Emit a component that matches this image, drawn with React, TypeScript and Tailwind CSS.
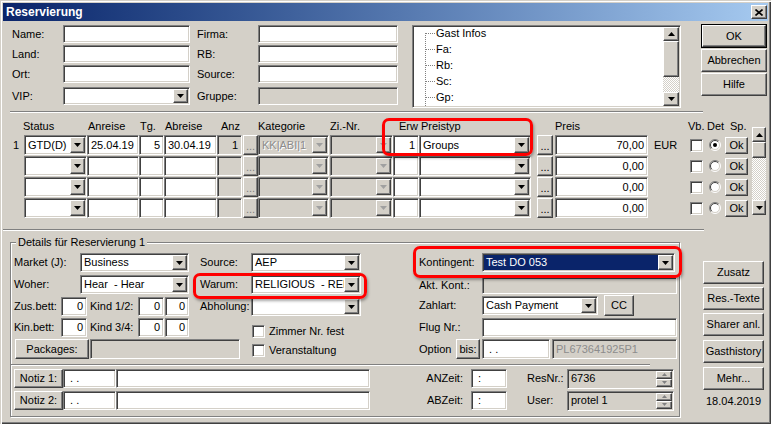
import clsx from "clsx";
import type { ReactNode } from "react";

const SUNKEN =
  "border border-t-[#808080] border-l-[#808080] border-b-white border-r-white shadow-[inset_1px_1px_0_#404040,inset_-1px_-1px_0_#d4d0c8]";
const RAISED =
  "border border-t-white border-l-white border-b-[#404040] border-r-[#404040] bg-[#d4d0c8] shadow-[inset_-1px_-1px_0_#808080]";
const HATCH =
  "bg-[repeating-conic-gradient(#ffffff_0%_25%,#d4d0c8_0%_50%)] bg-[length:2px_2px]";

interface RowData {
  idx: string;
  status: string;
  anreise: string;
  tg: string;
  abreise: string;
  anz: string;
  kat: string;
  erw: string;
  preistyp: string;
  preis: string;
  first: boolean;
}

const rows: RowData[] = [
  { idx: "1", status: "GTD(D)", anreise: "25.04.19", tg: "5", abreise: "30.04.19", anz: "1", kat: "KK|ABI|1", erw: "1", preistyp: "Groups", preis: "70,00", first: true },
  { idx: "", status: "", anreise: "", tg: "", abreise: "", anz: "", kat: "", erw: "", preistyp: "", preis: "0,00", first: false },
  { idx: "", status: "", anreise: "", tg: "", abreise: "", anz: "", kat: "", erw: "", preistyp: "", preis: "0,00", first: false },
  { idx: "", status: "", anreise: "", tg: "", abreise: "", anz: "", kat: "", erw: "", preistyp: "", preis: "0,00", first: false },
];

const Tri = ({ up = false, color = "#000" }: { up?: boolean; color?: string }) => (
  <svg width="7" height="4" viewBox="0 0 7 4">
    <path d={up ? "M0 4h7L3.5 0z" : "M0 0h7L3.5 4z"} fill={color} />
  </svg>
);

const SmallTri = ({ up = false }: { up?: boolean }) => (
  <svg width="5" height="3" viewBox="0 0 5 3">
    <path d={up ? "M0 3h5L2.5 0z" : "M0 0h5L2.5 3z"} fill="#808080" />
  </svg>
);

function DropBtn({ disabled }: { disabled?: boolean }) {
  return (
    <div className={clsx(RAISED, "flex w-[15px] shrink-0 items-center justify-center")}>
      <Tri color={disabled ? "#a0a0a0" : "#000"} />
    </div>
  );
}

function Combo({
  className,
  value = "",
  disabled,
  selected,
}: {
  className?: string;
  value?: string;
  disabled?: boolean;
  selected?: boolean;
}) {
  return (
    <div className={clsx(SUNKEN, "flex shrink-0 p-px", disabled ? "bg-[#d4d0c8]" : "bg-white", className)}>
      <div
        className={clsx(
          "flex min-w-0 flex-1 items-center overflow-hidden whitespace-pre pl-[2px]",
          selected && "bg-[#0a246a] text-white",
          disabled && "text-[#8c8c8c] [text-shadow:1px_1px_0_#fff]"
        )}
      >
        {value}
      </div>
      <DropBtn disabled={disabled} />
    </div>
  );
}

function Field({
  className,
  gray,
  right,
  muted,
  children,
}: {
  className?: string;
  gray?: boolean;
  right?: boolean;
  muted?: boolean;
  children?: ReactNode;
}) {
  return (
    <div
      className={clsx(
        SUNKEN,
        "flex shrink-0 items-center overflow-hidden whitespace-nowrap px-[3px]",
        gray ? "bg-[#d4d0c8]" : "bg-white",
        right && "justify-end",
        muted && "text-[#8c8c8c]",
        className
      )}
    >
      {children}
    </div>
  );
}

function Btn({ className, children, dim }: { className?: string; children?: ReactNode; dim?: boolean }) {
  return (
    <div
      className={clsx(
        RAISED,
        "flex shrink-0 items-center justify-center whitespace-nowrap",
        dim && "text-[#808080]",
        className
      )}
    >
      {children}
    </div>
  );
}

const Check = ({ className }: { className?: string }) => (
  <div className={clsx(SUNKEN, "h-[13px] w-[13px] shrink-0 bg-white", className)} />
);

const Radio = ({ className, checked }: { className?: string; checked?: boolean }) => (
  <svg className={clsx("shrink-0", className)} width="12" height="12" viewBox="0 0 12 12">
    <circle cx="6" cy="6" r="5" fill="#fff" />
    <path d="M2.1 9.9A5.5 5.5 0 0 1 9.9 2.1" stroke="#808080" fill="none" />
    <path d="M2.8 9.2A4.5 4.5 0 0 1 9.2 2.8" stroke="#404040" fill="none" />
    <path d="M9.9 2.1A5.5 5.5 0 0 1 2.1 9.9" stroke="#fff" fill="none" />
    <path d="M9.2 2.8A4.5 4.5 0 0 1 2.8 9.2" stroke="#d4d0c8" fill="none" />
    {checked && <circle cx="6" cy="6" r="2" fill="#000" />}
  </svg>
);

function VScroll({ className, thumb, btn }: { className?: string; thumb: string; btn: string }) {
  return (
    <div className={clsx("flex shrink-0 flex-col", className)}>
      <div className={clsx(RAISED, "flex items-center justify-center", btn)}>
        <Tri up />
      </div>
      <div className={clsx(RAISED, thumb)} />
      <div className={clsx("flex-1", HATCH)} />
      <div className={clsx(RAISED, "flex items-center justify-center", btn)}>
        <Tri />
      </div>
    </div>
  );
}

function Spin({ className, value }: { className?: string; value: string }) {
  return (
    <div className={clsx(SUNKEN, "flex shrink-0 bg-[#d4d0c8] p-px", className)}>
      <div className="flex flex-1 items-center pl-[2px]">{value}</div>
      <div className="flex w-[16px] flex-col">
        <div className={clsx(RAISED, "flex flex-1 items-center justify-center")}>
          <SmallTri up />
        </div>
        <div className={clsx(RAISED, "flex flex-1 items-center justify-center")}>
          <SmallTri />
        </div>
      </div>
    </div>
  );
}

function ResRow({ r }: { r: RowData }) {
  return (
    <div className="flex h-[20px] items-center">
      <span className="w-[12px] shrink-0 pl-px">{r.idx}</span>
      <Combo className="h-[20px] w-[63px]" value={r.status} />
      <Field className="h-[20px] w-[52px]">{r.anreise}</Field>
      <Field className="h-[20px] w-[25px]" right>{r.tg}</Field>
      <Field className="h-[20px] w-[53px]">{r.abreise}</Field>
      <Field className="h-[20px] w-[25px]" gray right>{r.anz}</Field>
      <Btn className="ml-px h-[20px] w-[15px] items-end pb-[2px] leading-none" dim>...</Btn>
      <Combo className="h-[20px] w-[71px]" value={r.kat} disabled />
      <Combo className="ml-px h-[20px] w-[63px]" disabled />
      <Field className="h-[20px] w-[26px]" right>{r.erw}</Field>
      <Combo className="h-[20px] w-[112px]" value={r.preistyp} />
      <Btn className="ml-[6px] h-[20px] w-[16px] items-end pb-[2px] leading-none">...</Btn>
      <Field className="ml-[2px] h-[20px] w-[93px]" right>{r.preis}</Field>
      <span className="w-[42px] shrink-0 pl-[6px]">{r.first ? "EUR" : ""}</span>
      <Check />
      <Radio className="ml-[6px]" checked={r.first} />
      <Btn className="ml-[4px] h-[17px] w-[23px]">Ok</Btn>
    </div>
  );
}

export default function App() {
  return (
    <div className="relative h-[424px] w-[771px] overflow-hidden bg-[#d4d0c8] p-[3px] font-['Liberation_Sans',Arial,sans-serif] text-[11px] leading-[13px] text-black shadow-[inset_1px_1px_0_#d4d0c8,inset_2px_2px_0_#ffffff,inset_-1px_-1px_0_#404040,inset_-2px_-2px_0_#808080]">
      {/* title bar */}
      <div className="flex h-[18px] items-center bg-linear-to-r from-[#0a246a] to-[#a6caf0] pl-[3px] pr-[1px]">
        <span className="text-[12px] font-bold text-white">Reservierung</span>
        <div className={clsx(RAISED, "ml-auto flex h-[14px] w-[16px] items-center justify-center")}>
          <svg width="8" height="7" viewBox="0 0 8 7">
            <path d="M0.5 0.5L7.5 6.5M7.5 0.5L0.5 6.5" stroke="#000" strokeWidth="1.6" />
          </svg>
        </div>
      </div>

      {/* top fields */}
      <div className="flex h-[90px]">
        <div className="ml-[9px] flex flex-col pt-[4px]">
          <div className="flex h-[18px] items-center">
            <span className="w-[51px]">Name:</span>
            <Field className="h-[18px] w-[127px]" />
            <span className="ml-[7px] w-[61px]">Firma:</span>
            <Field className="h-[18px] w-[140px]" />
          </div>
          <div className="mt-[2px] flex h-[18px] items-center">
            <span className="w-[51px]">Land:</span>
            <Field className="h-[18px] w-[127px]" />
            <span className="ml-[7px] w-[61px]">RB:</span>
            <Field className="h-[18px] w-[140px]" />
          </div>
          <div className="mt-[2px] flex h-[18px] items-center">
            <span className="w-[51px]">Ort:</span>
            <Field className="h-[18px] w-[127px]" />
            <span className="ml-[7px] w-[61px]">Source:</span>
            <Field className="h-[18px] w-[140px]" />
          </div>
          <div className="mt-[4px] flex h-[18px] items-center">
            <span className="w-[51px]">VIP:</span>
            <Combo className="h-[18px] w-[127px]" />
            <span className="ml-[7px] w-[61px]">Gruppe:</span>
            <Field className="h-[18px] w-[140px]" gray />
          </div>
        </div>

        <div className={clsx(SUNKEN, "ml-[14px] mt-[4px] flex h-[83px] w-[269px] bg-white p-px")}>
          <div className="flex flex-1 overflow-hidden">
            <svg width="22" height="79" viewBox="0 0 22 79" className="shrink-0">
              <g stroke="#808080" strokeDasharray="1 1" fill="none">
                <path d="M11.5 6V79" />
                <path d="M12 6.5H21M12 22.5H21M12 38.5H21M12 54.5H21M12 70.5H21" />
              </g>
            </svg>
            <div className="-mt-[2px] flex flex-col leading-[16px]">
              <span>Gast Infos</span>
              <span>Fa:</span>
              <span>Rb:</span>
              <span>Sc:</span>
              <span>Gp:</span>
            </div>
          </div>
          <VScroll className="w-[16px]" btn="h-[14px]" thumb="h-[36px]" />
        </div>

        <div className="ml-[20px] mt-[3px] flex w-[66px] flex-col gap-px">
          <div className="border border-black">
            <Btn className="h-[22px] w-full">OK</Btn>
          </div>
          <Btn className="h-[23px]">Abbrechen</Btn>
          <Btn className="h-[23px]">Hilfe</Btn>
        </div>
      </div>

      <div className="ml-[7px] h-[2px] w-[693px] border-t border-b border-t-[#808080] border-b-white" />

      {/* reservation rows */}
      <div className="flex h-[116px]">
        <div className="ml-[9px] flex flex-col pt-[7px]">
          <div className="flex h-[12px] items-center whitespace-nowrap">
            <span className="ml-[11px] w-[65px] shrink-0">Status</span>
            <span className="w-[52px] shrink-0">Anreise</span>
            <span className="w-[25px] shrink-0">Tg.</span>
            <span className="w-[56px] shrink-0">Abreise</span>
            <span className="w-[37px] shrink-0">Anz</span>
            <span className="w-[72px] shrink-0">Kategorie</span>
            <span className="w-[69px] shrink-0">Zi.-Nr.</span>
            <span className="w-[22px] shrink-0">Erw</span>
            <span className="w-[134px] shrink-0">Preistyp</span>
            <span className="w-[133px] shrink-0">Preis</span>
            <span className="w-[19px] shrink-0">Vb.</span>
            <span className="w-[23px] shrink-0">Det</span>
            <span>Sp.</span>
          </div>
          <div className="mt-[3px] flex flex-col gap-px">
            {rows.map((r, i) => (
              <ResRow key={i} r={r} />
            ))}
          </div>
        </div>
        <VScroll className="ml-[4px] mt-[14px] h-[88px] w-[14px]" btn="h-[15px]" thumb="h-[16px]" />
      </div>

      <div className="h-[2px] w-[701px] border-t border-b border-t-[#808080] border-b-white" />

      {/* details */}
      <div className="flex">
        <div className="relative ml-[7px] mt-[11px] h-[175px] w-[670px] border border-[#808080] shadow-[inset_1px_1px_0_#fff,1px_1px_0_#fff]">
          <span className="absolute -top-[7px] left-[5px] bg-[#d4d0c8] px-[2px]">Details für Reservierung 1</span>

          <div className="flex pt-[10px]">
            <div className="ml-[3px] flex w-[347px] flex-col">
              <div className="flex h-[19px] items-center">
                <span className="w-[66px] shrink-0">Market (J):</span>
                <Combo className="h-[19px] w-[109px]" value="Business" />
                <span className="ml-[11px] w-[51px] shrink-0">Source:</span>
                <Combo className="h-[19px] w-[110px]" value="AEP" />
              </div>
              <div className="mt-[3px] flex h-[19px] items-center">
                <span className="w-[66px] shrink-0">Woher:</span>
                <Combo className="h-[19px] w-[109px]" value="Hear  - Hear" />
                <span className="ml-[11px] w-[51px] shrink-0">Warum:</span>
                <Combo className="h-[19px] w-[110px]" value="RELIGIOUS  - REL" />
              </div>
              <div className="mt-[3px] flex h-[19px] items-center">
                <span className="w-[47px] shrink-0">Zus.bett:</span>
                <Field className="h-[19px] w-[26px]" right>0</Field>
                <span className="ml-[3px] w-[48px] shrink-0">Kind 1/2:</span>
                <Field className="h-[19px] w-[26px]" right>0</Field>
                <Field className="ml-px h-[19px] w-[24px]" right>0</Field>
                <span className="ml-[11px] w-[51px] shrink-0">Abholung:</span>
                <Combo className="h-[19px] w-[110px]" />
              </div>
              <div className="mt-[2px] flex">
                <div className="flex w-[226px] shrink-0 flex-col">
                  <div className="flex h-[19px] items-center">
                    <span className="w-[47px] shrink-0">Kin.bett:</span>
                    <Field className="h-[19px] w-[26px]" right>0</Field>
                    <span className="ml-[3px] w-[48px] shrink-0">Kind 3/4:</span>
                    <Field className="h-[19px] w-[26px]" right>0</Field>
                    <Field className="ml-px h-[19px] w-[24px]" right>0</Field>
                  </div>
                  <div className="mt-[2px] flex h-[20px] items-center">
                    <Btn className="ml-px h-[20px] w-[74px]">Packages:</Btn>
                    <Field className="ml-px h-[20px] w-[150px]" gray />
                  </div>
                </div>
                <div className="ml-[12px] flex flex-col">
                  <div className="mt-[7px] flex h-[13px] items-center">
                    <Check />
                    <span className="ml-[4px]">Zimmer Nr. fest</span>
                  </div>
                  <div className="mt-[6px] flex h-[13px] items-center">
                    <Check />
                    <span className="ml-[4px]">Veranstaltung</span>
                  </div>
                </div>
              </div>
            </div>

            <div className="ml-[58px] flex flex-col">
              <div className="flex h-[19px] items-center">
                <span className="w-[63px] shrink-0">Kontingent:</span>
                <Combo className="h-[19px] w-[193px]" value="Test DO 053" selected />
              </div>
              <div className="mt-[5px] flex h-[17px] items-center">
                <span className="w-[63px] shrink-0">Akt. Kont.:</span>
                <Field className="h-[17px] w-[195px]" gray />
              </div>
              <div className="mt-px flex h-[21px] items-center">
                <span className="w-[63px] shrink-0">Zahlart:</span>
                <Combo className="h-[19px] w-[116px]" value="Cash Payment" />
                <Btn className="ml-[6px] h-[21px] w-[30px]">CC</Btn>
              </div>
              <div className="mt-[2px] flex h-[19px] items-center">
                <span className="w-[63px] shrink-0">Flug Nr.:</span>
                <Field className="h-[19px] w-[195px]" />
              </div>
              <div className="mt-[2px] flex h-[20px] items-center">
                <span className="w-[37px] shrink-0">Option</span>
                <Btn className="h-[20px] w-[24px]">bis:</Btn>
                <Field className="ml-[2px] h-[20px] w-[68px]">&nbsp;. .</Field>
                <Field className="ml-[2px] h-[20px] w-[125px]" gray muted>PL673641925P1</Field>
              </div>
            </div>
          </div>

          <div className="mt-[5px] h-[2px] w-[639px] border-t border-b border-t-[#808080] border-b-white" />

          <div className="mt-[3px] flex">
            <div className="ml-[3px] flex flex-col">
              <div className="flex h-[19px]">
                <Btn className="h-[19px] w-[49px]">Notiz 1:</Btn>
                <Field className="h-[19px] w-[53px]">&nbsp;. .</Field>
                <Field className="h-[19px] w-[254px]" />
              </div>
              <div className="mt-[3px] flex h-[19px]">
                <Btn className="h-[19px] w-[49px]">Notiz 2:</Btn>
                <Field className="h-[19px] w-[53px]">&nbsp;. .</Field>
                <Field className="h-[19px] w-[254px]" />
              </div>
            </div>
            <div className="flex flex-col">
              <div className="flex h-[19px] items-center">
                <span className="w-[101px] shrink-0 pr-[8px] text-right">ANZeit:</span>
                <Field className="h-[19px] w-[36px]">&nbsp;:</Field>
              </div>
              <div className="mt-[3px] flex h-[19px] items-center">
                <span className="w-[101px] shrink-0 pr-[8px] text-right">ABZeit:</span>
                <Field className="h-[19px] w-[36px]">&nbsp;:</Field>
              </div>
            </div>
            <div className="ml-[20px] flex flex-col">
              <div className="flex h-[19px] items-center">
                <span className="w-[40px] shrink-0">ResNr.:</span>
                <Spin className="h-[20px] w-[107px]" value="6736" />
              </div>
              <div className="mt-[3px] flex h-[19px] items-center">
                <span className="w-[40px] shrink-0">User:</span>
                <Spin className="h-[20px] w-[107px]" value="protel 1" />
              </div>
            </div>
          </div>
        </div>

        <div className="ml-[23px] mt-[30px] flex w-[61px] flex-col">
          <Btn className="h-[23px]">Zusatz</Btn>
          <Btn className="mt-[3px] h-[23px]">Res.-Texte</Btn>
          <Btn className="mt-[3px] h-[23px]">Sharer anl.</Btn>
          <Btn className="mt-[4px] h-[23px]">Gasthistory</Btn>
          <Btn className="mt-[4px] h-[23px]">Mehr...</Btn>
          <span className="mt-[5px] text-center">18.04.2019</span>
        </div>
      </div>

      {/* highlight marks */}
      <div className="pointer-events-none absolute left-[382px] top-[118px] h-[38px] w-[151px] rounded-[7px] border-[3px] border-[#ff0000] shadow-[1px_2px_3px_rgba(0,0,0,0.35)]" />
      <div className="pointer-events-none absolute left-[193px] top-[273px] h-[26px] w-[174px] rounded-[7px] border-[3px] border-[#ff0000] shadow-[1px_2px_3px_rgba(0,0,0,0.35)]" />
      <div className="pointer-events-none absolute left-[413px] top-[246px] h-[32px] w-[269px] rounded-[7px] border-[3px] border-[#ff0000] shadow-[1px_2px_3px_rgba(0,0,0,0.35)]" />
    </div>
  );
}
